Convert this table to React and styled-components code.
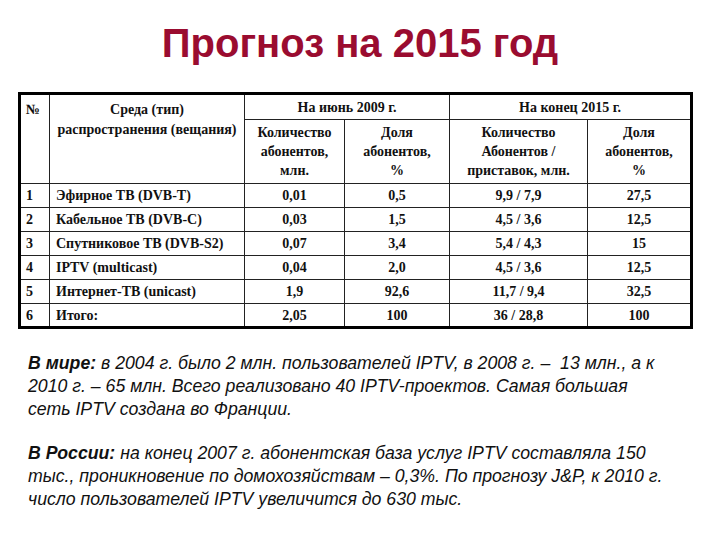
import React from 'react';
import styled, { createGlobalStyle } from 'styled-components';

const GlobalStyle = createGlobalStyle`
  body {
    margin: 0;
    background: #ffffff;
  }
`;

const Page = styled.div`
  width: 720px;
  height: 540px;
  padding-top: 20px;
  box-sizing: border-box;
  background: #ffffff;
  overflow: hidden;
`;

const Title = styled.h1`
  margin: 0;
  height: 46px;
  line-height: 46px;
  text-align: center;
  font-family: "Liberation Sans", Arial, sans-serif;
  font-size: 40px;
  font-weight: bold;
  color: #9a0c30;
`;

const Table = styled.table`
  margin: 26px 0 0 18px;
  width: 672px;
  table-layout: fixed;
  border-collapse: collapse;
  border: 3px solid #000;
  font-family: "Liberation Serif", "Times New Roman", serif;
  font-size: 14px;
  font-weight: bold;
  color: #111;
`;

const Cell = styled.td`
  border: 1px solid #222;
  padding: 0 ${(p) => (p.$pad ? p.$pad : 0)}px;
  text-align: ${(p) => p.$align || 'center'};
  vertical-align: ${(p) => p.$valign || 'middle'};
  line-height: ${(p) => p.$lh || 19}px;
`;

const HeadRow = styled.tr`
  height: ${(p) => p.$h}px;
`;

const Row = styled.tr`
  height: 24px;
`;

const TopPad = styled.div`
  padding-top: 5px;
`;

const Text = styled.div`
  margin: 23px 0 0 28px;
  font-family: "Liberation Sans", Arial, sans-serif;
  font-size: 17.7px;
  font-style: italic;
  line-height: 23px;
  color: #111;
`;

const Para = styled.p`
  margin: 0 0 21px;
  white-space: pre;
`;

const Lead = styled.b`
  font-weight: bold;
`;

const rows = [
  ['1', 'Эфирное ТВ (DVB-T)', '0,01', '0,5', '9,9 / 7,9', '27,5'],
  ['2', 'Кабельное ТВ (DVB-C)', '0,03', '1,5', '4,5 / 3,6', '12,5'],
  ['3', 'Спутниковое ТВ (DVB-S2)', '0,07', '3,4', '5,4 / 4,3', '15'],
  ['4', 'IPTV (multicast)', '0,04', '2,0', '4,5 / 3,6', '12,5'],
  ['5', 'Интернет-ТВ (unicast)', '1,9', '92,6', '11,7 / 9,4', '32,5'],
  ['6', 'Итого:', '2,05', '100', '36 / 28,8', '100'],
];

export default function App() {
  return (
    <Page>
      <GlobalStyle />
      <Title>Прогноз на 2015 год</Title>
      <Table>
        <colgroup>
          <col style={{ width: 30 }} />
          <col style={{ width: 195 }} />
          <col style={{ width: 100 }} />
          <col style={{ width: 105 }} />
          <col style={{ width: 138 }} />
          <col style={{ width: 104 }} />
        </colgroup>
        <tbody>
          <HeadRow $h={26}>
            <Cell rowSpan={2} $align="left" $valign="top" $pad={5} $lh={20}>
              <TopPad>№</TopPad>
            </Cell>
            <Cell rowSpan={2} $valign="top" $lh={20}>
              <TopPad>
                Среда (тип)
                <br />
                распространения (вещания)
              </TopPad>
            </Cell>
            <Cell colSpan={2}>На июнь 2009 г.</Cell>
            <Cell colSpan={2}>На конец 2015 г.</Cell>
          </HeadRow>
          <HeadRow $h={64}>
            <Cell>
              Количество
              <br />
              абонентов,
              <br />
              млн.
            </Cell>
            <Cell>
              Доля
              <br />
              абонентов,
              <br />%
            </Cell>
            <Cell>
              Количество
              <br />
              Абонентов /
              <br />
              приставок, млн.
            </Cell>
            <Cell>
              Доля
              <br />
              абонентов,
              <br />%
            </Cell>
          </HeadRow>
          {rows.map((r) => (
            <Row key={r[0]}>
              <Cell $align="left" $pad={5}>{r[0]}</Cell>
              <Cell $align="left" $pad={6}>{r[1]}</Cell>
              <Cell>{r[2]}</Cell>
              <Cell>{r[3]}</Cell>
              <Cell>{r[4]}</Cell>
              <Cell>{r[5]}</Cell>
            </Row>
          ))}
        </tbody>
      </Table>
      <Text>
        <Para>
          <Lead>В мире:</Lead>{' в 2004 г. было 2 млн. пользователей IPTV, в 2008 г. –  13 млн., а к'}
          <br />
          2010 г. – 65 млн. Всего реализовано 40 IPTV-проектов. Самая большая
          <br />
          сеть IPTV создана во Франции.
        </Para>
        <Para>
          <Lead>В России:</Lead> на конец 2007 г. абонентская база услуг IPTV составляла 150
          <br />
          тыс., проникновение по домохозяйствам – 0,3%. По прогнозу J&amp;P, к 2010 г.
          <br />
          число пользователей IPTV увеличится до 630 тыс.
        </Para>
      </Text>
    </Page>
  );
}
